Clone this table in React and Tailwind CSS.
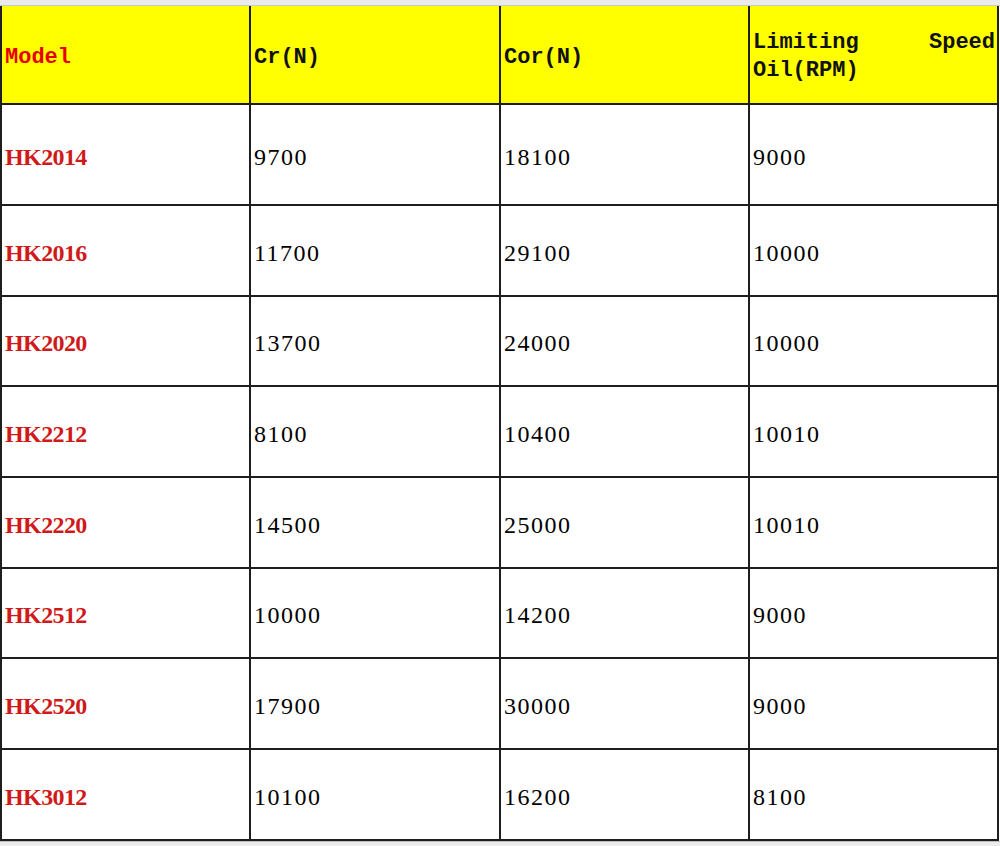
import React from "react";

const rows = [
    { model: "HK2014", cr: "9700", cor: "18100", speed: "9000", h: "h-[101px]" },
    { model: "HK2016", cr: "11700", cor: "29100", speed: "10000", h: "h-[91px]" },
    { model: "HK2020", cr: "13700", cor: "24000", speed: "10000", h: "h-[90px]" },
    { model: "HK2212", cr: "8100", cor: "10400", speed: "10010", h: "h-[91px]" },
    { model: "HK2220", cr: "14500", cor: "25000", speed: "10010", h: "h-[91px]" },
    { model: "HK2512", cr: "10000", cor: "14200", speed: "9000", h: "h-[90px]" },
    { model: "HK2520", cr: "17900", cor: "30000", speed: "9000", h: "h-[91px]" },
    { model: "HK3012", cr: "10100", cor: "16200", speed: "8100", h: "h-[91px]" },
];

const mono = "font-['Liberation_Mono',monospace] font-bold text-[22px]";
const serif = "font-['Liberation_Serif',serif]";
const cell = "border-r-2 border-b-2 border-[#1e1e1e] flex items-center pl-[3px]";

const App = () => {
    return (
        <div className="w-[1000px] h-[846px] bg-white overflow-hidden">
            {/* sheet strip above */}
            <div className="h-[6px] bg-[#ebebeb] border-b border-[#c9c9c9]" />

            <div className="w-[999px] border-l-2 border-[#1e1e1e]">
                <div className="grid grid-cols-[249px_250px_249px_249px] h-[99px] bg-[#ffff00]">
                    <div className={`${cell} pt-[6px] text-[#e60000] ${mono}`}>Model</div>
                    <div className={`${cell} pt-[6px] text-[#111] ${mono}`}>Cr(N)</div>
                    <div className={`${cell} pt-[6px] text-[#111] ${mono}`}>Cor(N)</div>
                    <div className={`${cell} pr-[2px] pt-[4px] text-[#111] ${mono}`}>
                        <p className="w-full text-justify leading-[28px]">Limiting Speed Oil(RPM)</p>
                    </div>
                </div>

                {rows.map((r) => (
                    <div key={r.model} className={`grid grid-cols-[249px_250px_249px_249px] ${r.h}`}>
                        <div className={`${cell} pt-[4px] font-bold text-[24px] tracking-[-0.6px] text-[#d01a1a] ${serif}`}>
                            {r.model}
                        </div>
                        <div className={`${cell} pt-[4px] text-[24px] tracking-[1.5px] text-black ${serif}`}>
                            {r.cr}
                        </div>
                        <div className={`${cell} pt-[4px] text-[24px] tracking-[1.5px] text-black ${serif}`}>
                            {r.cor}
                        </div>
                        <div className={`${cell} pt-[4px] text-[24px] tracking-[1.5px] text-black ${serif}`}>
                            {r.speed}
                        </div>
                    </div>
                ))}
            </div>

            {/* sheet strip below */}
            <div className="h-[10px] bg-[#ececec] border-t border-[#bdbdbd]" />
        </div>
    );
};

export default App;
